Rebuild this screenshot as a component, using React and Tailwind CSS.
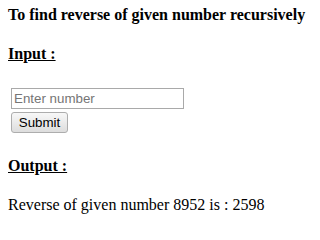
import React from "react";

const App = () => {
	return (
		<div className="min-h-screen bg-white px-2 text-black font-['Liberation_Serif',serif]">
			<p className="pt-[6px] text-[16px] leading-[18px] font-bold">
				To find reverse of given number recursively
			</p>

			<p className="mt-[21px] text-[16px] leading-[18px] font-bold underline">
				Input :
			</p>

			<div className="mt-[25px] ml-[3px] flex flex-col items-start gap-[3px] font-['Liberation_Sans',Arial,sans-serif]">
				<input
					type="text"
					placeholder="Enter number"
					className="w-[173px] h-[21px] px-[2px] border border-[#a9a9a9] text-[13.33px] text-black placeholder:text-[#757575] outline-none"
				/>
				<button className="h-[21px] w-[57px] border border-[#adadad] rounded-[3px] bg-gradient-to-b from-[#f8f8f8] to-[#dddddd] text-[13.33px] leading-none text-black">
					Submit
				</button>
			</div>

			<p className="mt-[24px] text-[16px] leading-[18px] font-bold underline">
				Output :
			</p>

			<p className="mt-[21px] text-[16px] leading-[18px]">
				Reverse of given number 8952 is : 2598
			</p>
		</div>
	);
};

export default App;
